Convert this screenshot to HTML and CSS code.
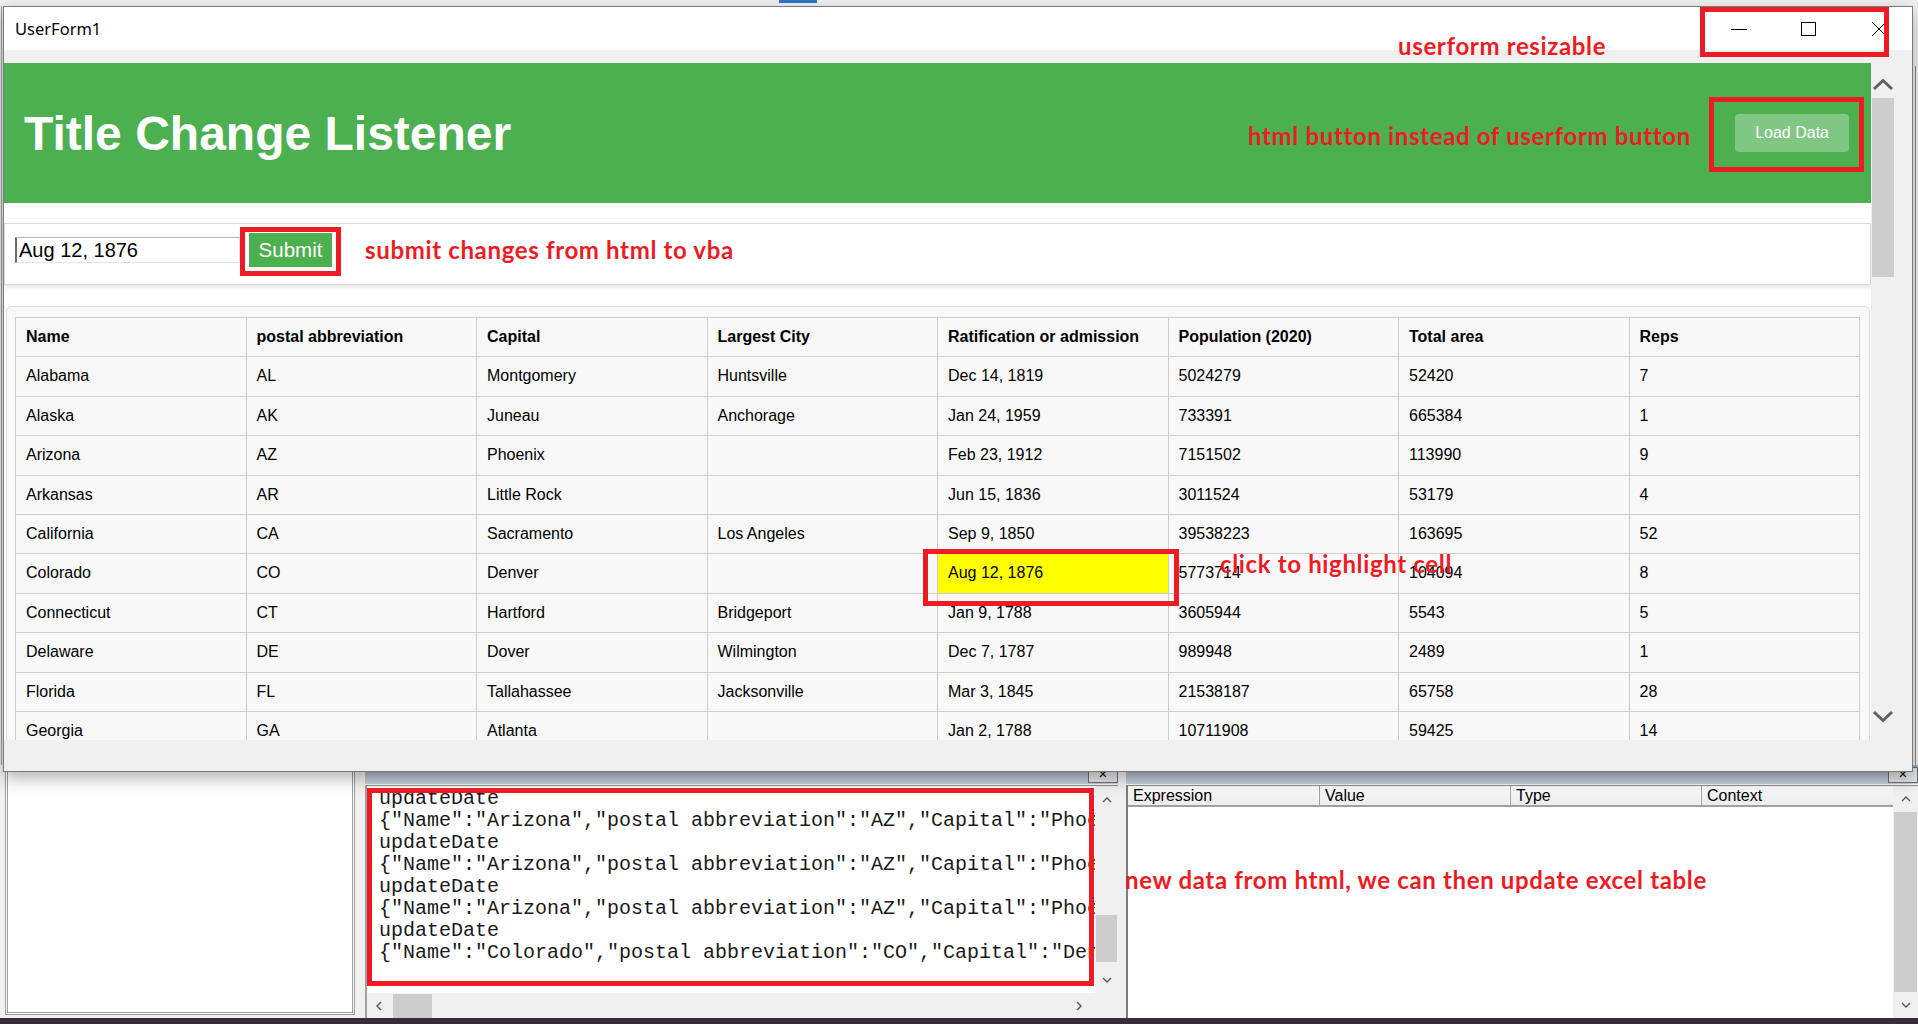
FILE: index.html
```html
<!DOCTYPE html>
<html>
<head>
<meta charset="utf-8">
<title>UserForm1</title>
<link rel="stylesheet" href="styles.css">
</head>
<body>
<div class="desktop">
  <div class="vbe-top"><span class="vbe-tab"></span></div>
  <div class="vbe-code"><span class="vbe-edge"></span></div>
  <div class="vbe-panes">
    <div class="pane-left"></div>
    <div class="pane-imm">
      <div class="caption"><span class="cap-btn">×</span></div>
      <div class="imm-body">
<pre class="imm-text">updateDate
{"Name":"Arizona","postal abbreviation":"AZ","Capital":"Phoe
updateDate
{"Name":"Arizona","postal abbreviation":"AZ","Capital":"Phoe
updateDate
{"Name":"Arizona","postal abbreviation":"AZ","Capital":"Phoe
updateDate
{"Name":"Colorado","postal abbreviation":"CO","Capital":"Den</pre>
        <div class="sb-v imm-v">
          <div class="sb-arrow"><svg width="10" height="6" viewBox="0 0 10 6"><polyline points="1,5 5,1 9,5" fill="none" stroke="#555" stroke-width="1.4"/></svg></div>
          <div class="sb-thumb imm-thumb"></div>
          <div class="sb-arrow sb-bottom"><svg width="10" height="6" viewBox="0 0 10 6"><polyline points="1,1 5,5 9,1" fill="none" stroke="#555" stroke-width="1.4"/></svg></div>
        </div>
        <div class="sb-h">
          <div class="sb-harrow"><svg width="6" height="10" viewBox="0 0 6 10"><polyline points="5,1 1,5 5,9" fill="none" stroke="#555" stroke-width="1.4"/></svg></div>
          <div class="sb-hthumb"></div>
          <div class="sb-harrow sb-right"><svg width="6" height="10" viewBox="0 0 6 10"><polyline points="1,1 5,5 1,9" fill="none" stroke="#555" stroke-width="1.4"/></svg></div>
        </div>
        <div class="sb-corner"></div>
      </div>
    </div>
    <div class="pane-watch">
      <div class="caption"><span class="cap-btn">×</span></div>
      <div class="watch-body">
        <div class="watch-list">
          <div class="watch-head">
            <span class="wh wh1">Expression</span>
            <span class="wh wh2">Value</span>
            <span class="wh wh3">Type</span>
            <span class="wh wh4">Context</span>
          </div>
        </div>
        <div class="sb-v watch-v">
          <div class="sb-arrow"><svg width="10" height="6" viewBox="0 0 10 6"><polyline points="1,5 5,1 9,5" fill="none" stroke="#555" stroke-width="1.4"/></svg></div>
          <div class="sb-thumb watch-thumb"></div>
          <div class="sb-arrow sb-bottom"><svg width="10" height="6" viewBox="0 0 10 6"><polyline points="1,1 5,5 9,1" fill="none" stroke="#555" stroke-width="1.4"/></svg></div>
        </div>
      </div>
    </div>
  </div>
  <div class="taskbar"></div>

  <div class="userform">
    <div class="titlebar">
      <span class="title">UserForm1</span>
      <div class="ctl">
        <span class="ctl-btn"><svg width="18" height="16" viewBox="0 0 18 16"><line x1="1" y1="8.5" x2="17" y2="8.5" stroke="#000" stroke-width="1"/></svg></span>
        <span class="ctl-btn"><svg width="16" height="16" viewBox="0 0 16 16"><rect x="0.5" y="1.5" width="14" height="13" fill="none" stroke="#000" stroke-width="1"/></svg></span>
        <span class="ctl-btn"><svg width="16" height="16" viewBox="0 0 16 16"><line x1="1" y1="1" x2="15" y2="15" stroke="#000" stroke-width="1"/><line x1="15" y1="1" x2="1" y2="15" stroke="#000" stroke-width="1"/></svg></span>
      </div>
    </div>
    <div class="client">
      <div class="browser">
        <div class="viewport">
          <div class="page-header">
            <h1>Title Change Listener</h1>
            <button class="load-btn">Load Data</button>
          </div>
          <div class="entry">
            <input class="entry-input" type="text" value="Aug 12, 1876">
            <button class="submit-btn">Submit</button>
          </div>
          <div class="table-wrap">
            <table class="states">
              <thead>
                <tr><th>Name</th><th>postal abbreviation</th><th>Capital</th><th>Largest City</th><th>Ratification or admission</th><th>Population (2020)</th><th>Total area</th><th>Reps</th></tr>
              </thead>
              <tbody>
                <tr><td>Alabama</td><td>AL</td><td>Montgomery</td><td>Huntsville</td><td>Dec 14, 1819</td><td>5024279</td><td>52420</td><td>7</td></tr>
                <tr><td>Alaska</td><td>AK</td><td>Juneau</td><td>Anchorage</td><td>Jan 24, 1959</td><td>733391</td><td>665384</td><td>1</td></tr>
                <tr><td>Arizona</td><td>AZ</td><td>Phoenix</td><td></td><td>Feb 23, 1912</td><td>7151502</td><td>113990</td><td>9</td></tr>
                <tr><td>Arkansas</td><td>AR</td><td>Little Rock</td><td></td><td>Jun 15, 1836</td><td>3011524</td><td>53179</td><td>4</td></tr>
                <tr><td>California</td><td>CA</td><td>Sacramento</td><td>Los Angeles</td><td>Sep 9, 1850</td><td>39538223</td><td>163695</td><td>52</td></tr>
                <tr><td>Colorado</td><td>CO</td><td>Denver</td><td></td><td class="hl">Aug 12, 1876</td><td>5773714</td><td>104094</td><td>8</td></tr>
                <tr><td>Connecticut</td><td>CT</td><td>Hartford</td><td>Bridgeport</td><td>Jan 9, 1788</td><td>3605944</td><td>5543</td><td>5</td></tr>
                <tr><td>Delaware</td><td>DE</td><td>Dover</td><td>Wilmington</td><td>Dec 7, 1787</td><td>989948</td><td>2489</td><td>1</td></tr>
                <tr><td>Florida</td><td>FL</td><td>Tallahassee</td><td>Jacksonville</td><td>Mar 3, 1845</td><td>21538187</td><td>65758</td><td>28</td></tr>
                <tr><td>Georgia</td><td>GA</td><td>Atlanta</td><td></td><td>Jan 2, 1788</td><td>10711908</td><td>59425</td><td>14</td></tr>
              </tbody>
            </table>
          </div>
        </div>
        <div class="vsb">
          <div class="vsb-arrow"><svg width="24" height="35" viewBox="0 0 24 35"><polyline points="3,26 12,17.5 21,26" fill="none" stroke="#606060" stroke-width="3"/></svg></div>
          <div class="vsb-thumb"></div>
          <div class="vsb-arrow vsb-bottom"><svg width="24" height="35" viewBox="0 0 24 35"><polyline points="3,7 12,15.5 21,7" fill="none" stroke="#606060" stroke-width="3"/></svg></div>
        </div>
      </div>
    </div>
  </div>

  <div class="redbox rb-ctl"></div>
  <div class="redbox rb-load"></div>
  <div class="redbox rb-submit"></div>
  <div class="redbox rb-cell"></div>
  <div class="redbox rb-imm"></div>

  <div class="anno a-resize">userform resizable</div>
  <div class="anno a-html">html button instead of userform button</div>
  <div class="anno a-submit">submit changes from html to vba</div>
  <div class="anno a-cell">click to highlight cell</div>
  <div class="anno a-new">new data from html, we can then update excel table</div>
</div>
</body>
</html>
```

FILE: styles.css
```css
* { box-sizing: border-box; }
html, body { margin: 0; padding: 0; }
body {
  width: 1918px;
  height: 1024px;
  overflow: hidden;
  background: #f0f0f0;
  font-family: "Liberation Sans", Arial, sans-serif;
}

.desktop {
  position: relative;
  width: 1918px;
  height: 1024px;
  display: flex;
  flex-direction: column;
  overflow: hidden;
  background: #f0f0f0;
}

/* ---------- VBE behind the form ---------- */
.vbe-top { height: 6px; display: flex; flex: none; }
.vbe-tab { margin-left: 779px; width: 38px; height: 3px; background: #2a76d2; }

.vbe-code {
  flex: 1;
  margin-left: 1px;
  border-left: 1px solid #9a9a9a;
  display: flex;
  justify-content: flex-end;
}
.vbe-edge { width: 1px; background: #8a8a8a; margin: 60px 2px 0 0; }

.vbe-panes { height: 253px; flex: none; display: flex; padding-left: 5px; }

.pane-left {
  width: 350px;
  height: 250px;
  background: #fff;
  border: 3px double #9c9c9c;
}

.pane-imm { width: 753px; margin-left: 10px; display: flex; flex-direction: column; }
.pane-watch { width: 792px; margin-left: 8px; display: flex; flex-direction: column; }

.caption {
  height: 20px;
  flex: none;
  background: linear-gradient(#9aa9ba, #c7d1dc);
  border-bottom: 1px solid #f4f6f8;
  display: flex;
  justify-content: flex-end;
  align-items: flex-start;
}
.cap-btn {
  width: 30px;
  height: 16px;
  margin-top: 2px;
  border: 1px solid #6f6f6f;
  background: #e4e4e4;
  font: 15px/12px "Liberation Sans", Arial, sans-serif;
  text-align: center;
  color: #000;
}

.imm-body {
  flex: 1;
  display: grid;
  grid-template-columns: 1fr 23px;
  grid-template-rows: 1fr 25px;
  border-left: 2px solid #a0a0a0;
  border-top: 1px solid #8c8c8c;
  background: #fff;
  min-height: 0;
}
.imm-text {
  margin: 0;
  padding: 2px 0 0 12px;
  font: 20px/22px "Liberation Mono", "Courier New", monospace;
  color: #1a1a1a;
  white-space: pre;
  overflow: hidden;
}

.sb-v {
  background: #f0f0f0;
  display: flex;
  flex-direction: column;
  align-items: stretch;
}
.sb-arrow { height: 28px; display: flex; align-items: center; justify-content: center; flex: none; }
.sb-bottom { margin-top: auto; height: 27px; }
.sb-thumb { background: #cdcdcd; margin: 0 1px; flex: none; }
.imm-thumb { margin-top: 101px; height: 47px; }

.sb-h { background: #f0f0f0; display: flex; align-items: center; }
.sb-harrow { width: 24px; height: 25px; display: flex; align-items: center; justify-content: center; flex: none; }
.sb-right { margin-left: auto; margin-right: 4px; }
.sb-hthumb { width: 39px; height: 24px; margin-left: 2px; background: #cdcdcd; }
.sb-corner { background: #f0f0f0; }

.watch-body {
  flex: 1;
  display: grid;
  grid-template-columns: 1fr 25px;
  border-top: 1px solid #8c8c8c;
  min-height: 0;
}
.watch-list { background: #fff; border-left: 2px solid #7d7d7d; }
.watch-head {
  height: 21px;
  display: flex;
  background: linear-gradient(#fbfbfb, #ececec);
  border-bottom: 2px solid #a0a0a0;
}
.wh {
  font: 16px/19px "Liberation Sans", Arial, sans-serif;
  color: #000;
  padding-left: 5px;
  border-right: 1px solid #a0a0a0;
  box-shadow: inset -1px 0 0 #fff;
  white-space: nowrap;
  overflow: hidden;
}
.wh1 { width: 192px; }
.wh2 { width: 191px; }
.wh3 { width: 191px; }
.wh4 { flex: 1; border-right: 0; box-shadow: none; }
.watch-v .sb-arrow { height: 26px; }
.watch-v .sb-bottom { height: 26px; }
.watch-thumb { margin-top: 0; height: 180px; }

.taskbar { height: 6px; flex: none; background: #3a2b39; }

/* ---------- UserForm window ---------- */
.userform {
  position: absolute;
  left: 3px;
  top: 6px;
  width: 1910px;
  height: 766px;
  border: 1px solid #7a7a7a;
  background: #f0f0f0;
  display: flex;
  flex-direction: column;
  box-shadow: 0 6px 16px rgba(0, 0, 0, 0.3);
}
.titlebar {
  height: 43px;
  flex: none;
  background: #fff;
  display: flex;
  align-items: center;
}
.title {
  padding-left: 11px;
  font: 16.5px "Noto Sans", "Open Sans", sans-serif;
  color: #000;
}
.ctl { margin-left: auto; margin-right: -2px; display: flex; height: 100%; }
.ctl-btn { width: 70px; display: flex; align-items: center; justify-content: center; }

.client { flex: 1; padding-top: 13px; display: flex; flex-direction: column; }
.browser { height: 677px; flex: none; display: flex; }
.viewport {
  width: 1867px;
  height: 677px;
  overflow: hidden;
  background: #fff;
  flex: none;
}
.vsb { width: 24px; flex: none; background: #f0f0f0; display: flex; flex-direction: column; }
.vsb-arrow { height: 35px; flex: none; }
.vsb-arrow svg { display: block; }
.vsb-thumb { height: 179px; margin: 0 1px; background: #cdcdcd; flex: none; }
.vsb-bottom { margin-top: auto; }

/* ---------- web page inside browser ---------- */
.page-header {
  height: 140px;
  background: #4caf50;
  display: flex;
  align-items: center;
  padding: 0 22px 0 20px;
}
.page-header h1 {
  margin: 0;
  font: 700 48px "Liberation Sans", Arial, sans-serif;
  color: #fff;
}
.load-btn {
  margin-left: auto;
  background: #81c784;
  color: #fff;
  border: 0;
  border-radius: 4px;
  padding: 10px 20px;
  font: 16px/18px "Liberation Sans", Arial, sans-serif;
}

.entry {
  margin-top: 20px;
  background: #fff;
  border: 1px solid #dcdcdc;
  box-shadow: 0 2px 4px rgba(0, 0, 0, 0.12);
  padding: 9px 10px 17px;
  display: flex;
  align-items: center;
  gap: 9px;
}
.entry-input {
  width: 225px;
  height: 26px;
  margin: 0;
  padding: 0 2px;
  font: 20px "Liberation Sans", Arial, sans-serif;
  color: #000;
  background: #fff;
  border-style: solid;
  border-width: 1px 1px 1px 2px;
  border-color: #b5b5b5 #e3e3e3 #e3e3e3 #6a6a6a;
  outline: none;
}
.submit-btn {
  width: 83px;
  height: 34px;
  margin: 0;
  padding: 0;
  border: 0;
  background: #4caf50;
  color: #fff;
  font: 20.5px "Liberation Sans", Arial, sans-serif;
}

.table-wrap {
  margin: 21px 1px 0 2px;
  background: #f8f8f8;
  border: 1px solid #dcdcdc;
  border-radius: 5px;
  padding: 10px 9px 10px 8px;
}
.states {
  width: 100%;
  border-collapse: collapse;
  table-layout: fixed;
  background: #f8f8f8;
}
.states th, .states td {
  border: 1px solid #cccccc;
  padding: 10px;
  text-align: left;
  font: 16px/18.4px "Liberation Sans", Arial, sans-serif;
  color: #000;
  white-space: nowrap;
  overflow: hidden;
}
.states th { font-weight: 700; }
.states td.hl { background: #ffff00; }

/* ---------- annotations (overlay) ---------- */
.redbox { position: absolute; border: 5px solid #ed1c24; }
.rb-ctl { left: 1700px; top: 7px; width: 189px; height: 50px; }
.rb-load { left: 1709px; top: 97px; width: 155px; height: 75px; }
.rb-submit { left: 240px; top: 227px; width: 101px; height: 49px; }
.rb-cell { left: 923px; top: 549px; width: 256px; height: 57px; }
.rb-imm { left: 367px; top: 788px; width: 727px; height: 198px; }

.anno {
  position: absolute;
  font: 700 24px/24px "Lato", sans-serif;
  letter-spacing: 0.65px;
  color: #ed1c24;
  white-space: nowrap;
}
.a-resize { left: 1398px; top: 34px; }
.a-html { left: 1248px; top: 124px; }
.a-submit { left: 365px; top: 238px; }
.a-cell { left: 1220px; top: 552px; }
.a-new { left: 1125px; top: 868px; }
```
